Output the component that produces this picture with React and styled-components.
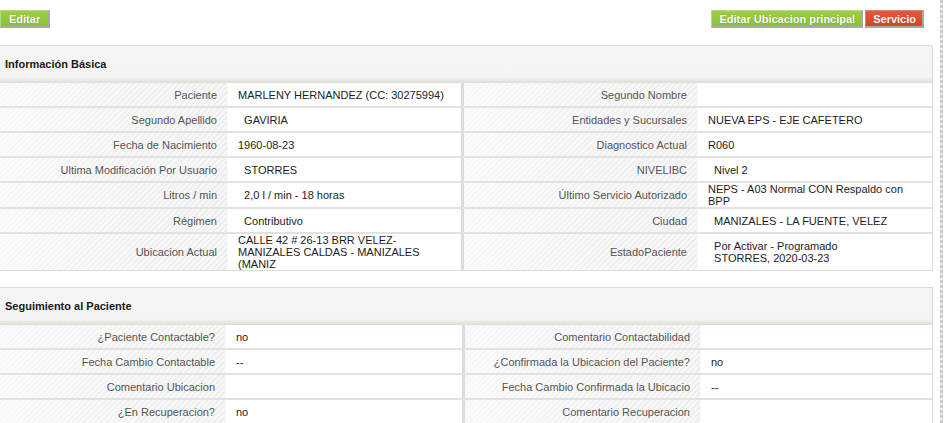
import React from 'react';
import styled, { createGlobalStyle } from 'styled-components';

const GlobalStyle = createGlobalStyle`
  html, body {
    margin: 0;
    padding: 0;
    background: #fff;
  }
  body {
    font-family: "Liberation Sans", Arial, sans-serif;
    font-size: 11px;
    color: #222;
  }
`;

const basicRows = [
  { l1: 'Paciente', v1: 'MARLENY HERNANDEZ (CC: 30275994)', l2: 'Segundo Nombre', v2: '' },
  { l1: 'Segundo Apellido', v1: '\u00a0\u00a0GAVIRIA', l2: 'Entidades y Sucursales', v2: 'NUEVA EPS - EJE CAFETERO' },
  { l1: 'Fecha de Nacimiento', v1: '1960-08-23', l2: 'Diagnostico Actual', v2: 'R060' },
  { l1: 'Ultima Modificación Por Usuario', v1: '\u00a0\u00a0STORRES', l2: 'NIVELIBC', v2: '\u00a0\u00a0Nivel 2' },
  { l1: 'Litros / min', v1: '\u00a0\u00a02,0 l / min - 18 horas', l2: 'Último Servicio Autorizado', v2: 'NEPS - A03 Normal CON Respaldo con BPP' },
  { l1: 'Régimen', v1: '\u00a0\u00a0Contributivo', l2: 'Ciudad', v2: '\u00a0\u00a0MANIZALES - LA FUENTE, VELEZ' },
  {
    l1: 'Ubicacion Actual',
    v1: 'CALLE 42 # 26-13 BRR VELEZ-MANIZALES CALDAS - MANIZALES (MANIZ',
    l2: 'EstadoPaciente',
    v2: ['\u00a0\u00a0Por Activar - Programado', '\u00a0\u00a0STORRES, 2020-03-23'],
  },
];

const followRows = [
  { l1: '¿Paciente Contactable?', v1: 'no', l2: 'Comentario Contactabilidad', v2: '' },
  { l1: 'Fecha Cambio Contactable', v1: '--', l2: '¿Confirmada la Ubicacion del Paciente?', v2: 'no' },
  { l1: 'Comentario Ubicacion', v1: '', l2: 'Fecha Cambio Confirmada la Ubicacio', v2: '--' },
  { l1: '¿En Recuperacion?', v1: 'no', l2: 'Comentario Recuperacion', v2: '' },
];

const renderValue = (v) =>
  Array.isArray(v)
    ? v.map((line, i) => (
        <React.Fragment key={i}>
          {line}
          {i < v.length - 1 && <br />}
        </React.Fragment>
      ))
    : v;

function InfoPanel({ title, rows, cols }) {
  return (
    <Panel>
      <PanelHeader>{title}</PanelHeader>
      {rows.map((r, i) => (
        <Row key={i} $cols={cols} $last={i === rows.length - 1}>
          <Label>{r.l1}</Label>
          <Value>{renderValue(r.v1)}</Value>
          <Label $split>{r.l2}</Label>
          <Value>{renderValue(r.v2)}</Value>
        </Row>
      ))}
    </Panel>
  );
}

export default function App() {
  return (
    <>
      <GlobalStyle />
      <Page>
        <Main>
          <Toolbar>
            <Button $color="green" $wide>Editar</Button>
            <ButtonGroup>
              <Button $color="green">Editar Ubicacion principal</Button>
              <Button $color="red">Servicio</Button>
            </ButtonGroup>
          </Toolbar>
          <InfoPanel title="Información Básica" rows={basicRows} cols="228px 233px 237px 1fr" />
          <InfoPanel title="Seguimiento al Paciente" rows={followRows} cols="226px 236px 239px 1fr" />
        </Main>
        <Gutter />
      </Page>
    </>
  );
}

const Page = styled.div`
  display: flex;
  align-items: stretch;
  min-height: 100vh;
`;

const Main = styled.div`
  width: 933px;
  flex: none;
`;

const Gutter = styled.div`
  width: 3px;
  margin-left: 7px;
  flex: none;
  background: repeating-linear-gradient(to bottom, #c9c9c9 0 3px, #ededed 3px 5px);
`;

const Toolbar = styled.div`
  display: flex;
  justify-content: space-between;
  align-items: flex-start;
  padding: 10px 9px 0 0;
  margin-bottom: 17px;
`;

const ButtonGroup = styled.div`
  display: flex;
  gap: 2px;
`;

const Button = styled.button`
  font-family: "Liberation Sans", Arial, sans-serif;
  font-size: 11px;
  font-weight: bold;
  color: #fff;
  text-shadow: 0 0 1px rgba(0, 0, 0, 0.35);
  height: 18px;
  line-height: 14px;
  padding: ${(p) => (p.$wide ? '0 8px 0 8px' : '0 6px 0 7px')};
  border: 1px solid ${(p) => (p.$color === 'red' ? '#e88070' : '#b5dd7a')};
  border-right: 2px solid #a8a8a8;
  border-bottom: 2px solid #a8a8a8;
  background: ${(p) =>
    p.$color === 'red'
      ? 'linear-gradient(to bottom, #e25a40, #d2442b)'
      : 'linear-gradient(to bottom, #9ccf47, #8bc13a)'};
  cursor: pointer;
`;

const Panel = styled.div`
  border: 1px solid #dcdcdc;
  border-left: none;
  margin-bottom: 16px;
`;

const PanelHeader = styled.div`
  height: 37px;
  display: flex;
  align-items: center;
  padding: 0 0 2px 5px;
  box-sizing: border-box;
  font-weight: bold;
  font-size: 11px;
  color: #1a1a1a;
  background: linear-gradient(to bottom, #f5f5f5 0, #f4f4f4 31px, #e6e6e0 35px, #dcdcd4 37px);
`;

const Row = styled.div`
  display: grid;
  grid-template-columns: ${(p) => p.$cols};
  border-bottom: ${(p) => (p.$last ? 'none' : '2px solid #e2e2e2')};
`;

const Label = styled.div`
  min-height: 23px;
  display: flex;
  align-items: center;
  justify-content: flex-end;
  text-align: right;
  padding: 0 11px 0 8px;
  color: #555;
  line-height: 12px;
  border-left: ${(p) => (p.$split ? '3px solid #dcdcdc' : 'none')};
  background:
    repeating-linear-gradient(135deg, rgba(255, 255, 255, 0.55) 0 2px, rgba(255, 255, 255, 0) 2px 4px),
    linear-gradient(to right, #f7f7f7, #eeeeee);
  box-shadow: inset -1px 0 0 #fafafa;
`;

const Value = styled.div`
  min-height: 23px;
  display: flex;
  align-items: center;
  padding: 0 10px;
  color: #1c1c24;
  line-height: 12px;
  background: #fff;
`;
